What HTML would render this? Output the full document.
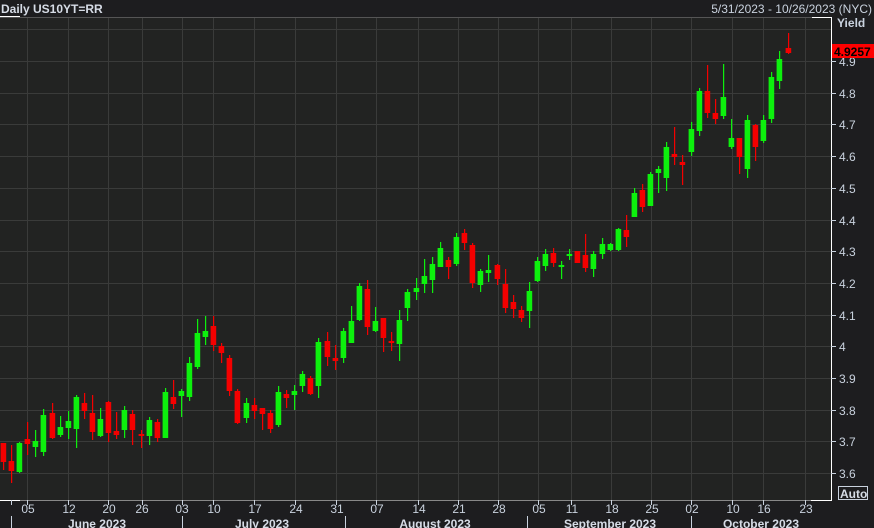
<!DOCTYPE html>
<html><head><meta charset="utf-8"><style>
html,body{margin:0;padding:0;background:#1d1d1f;}
svg{display:block}
text{font-family:"Liberation Sans",sans-serif;}
</style></head><body>
<svg width="874" height="528" viewBox="0 0 874 528" xmlns="http://www.w3.org/2000/svg">
<rect x="0" y="0" width="874" height="528" fill="#1d1d1f"/>
<rect x="0" y="17" width="831" height="483" fill="#222322"/>
<g stroke="#3a3b3a" stroke-width="1">
<line x1="0" y1="29.5" x2="831" y2="29.5"/><line x1="0" y1="61.5" x2="831" y2="61.5"/><line x1="0" y1="93.5" x2="831" y2="93.5"/><line x1="0" y1="124.5" x2="831" y2="124.5"/><line x1="0" y1="156.5" x2="831" y2="156.5"/><line x1="0" y1="188.5" x2="831" y2="188.5"/><line x1="0" y1="220.5" x2="831" y2="220.5"/><line x1="0" y1="251.5" x2="831" y2="251.5"/><line x1="0" y1="283.5" x2="831" y2="283.5"/><line x1="0" y1="315.5" x2="831" y2="315.5"/><line x1="0" y1="346.5" x2="831" y2="346.5"/><line x1="0" y1="378.5" x2="831" y2="378.5"/><line x1="0" y1="410.5" x2="831" y2="410.5"/><line x1="0" y1="441.5" x2="831" y2="441.5"/><line x1="0" y1="473.5" x2="831" y2="473.5"/>
<line x1="27.5" y1="17" x2="27.5" y2="500"/><line x1="68.5" y1="17" x2="68.5" y2="500"/><line x1="108.5" y1="17" x2="108.5" y2="500"/><line x1="142.5" y1="17" x2="142.5" y2="500"/><line x1="182.5" y1="17" x2="182.5" y2="500"/><line x1="213.5" y1="17" x2="213.5" y2="500"/><line x1="254.5" y1="17" x2="254.5" y2="500"/><line x1="295.5" y1="17" x2="295.5" y2="500"/><line x1="336.5" y1="17" x2="336.5" y2="500"/><line x1="376.5" y1="17" x2="376.5" y2="500"/><line x1="418.5" y1="17" x2="418.5" y2="500"/><line x1="458.5" y1="17" x2="458.5" y2="500"/><line x1="498.5" y1="17" x2="498.5" y2="500"/><line x1="538.5" y1="17" x2="538.5" y2="500"/><line x1="571.5" y1="17" x2="571.5" y2="500"/><line x1="611.5" y1="17" x2="611.5" y2="500"/><line x1="651.5" y1="17" x2="651.5" y2="500"/><line x1="691.5" y1="17" x2="691.5" y2="500"/><line x1="732.5" y1="17" x2="732.5" y2="500"/><line x1="763.5" y1="17" x2="763.5" y2="500"/><line x1="805.5" y1="17" x2="805.5" y2="500"/>
</g>
<line x1="0" y1="17.5" x2="812" y2="17.5" stroke="#555" />
<line x1="812" y1="17.5" x2="831" y2="17.5" stroke="#fff"/>
<line x1="0" y1="500.5" x2="831" y2="500.5" stroke="#888"/>
<line x1="0" y1="500.5" x2="20" y2="500.5" stroke="#fff"/>
<line x1="811" y1="500.5" x2="831" y2="500.5" stroke="#fff"/>
<line x1="831.5" y1="17" x2="831.5" y2="501" stroke="#fff"/>

<path stroke="#f40000" stroke-width="1.2" fill="none" d="M3.6 443v27M11.6 445v38M27.6 422v33M52.6 403v36M84.6 393v26M92.6 395v45M108.6 401v41M116.6 412v27M132.6 410v35M141.6 430v18M157.6 419v23M173.6 380v29M213.6 316v35M221.6 343v20M229.6 355v41M237.6 389v35M254.6 398v21M262.6 408v22M270.6 410v23M286.6 390v18M310.6 376v19M327.6 332v34M335.6 345v25M367.6 280v55M383.6 318v34M391.6 332v19M448.6 257v22M464.6 229v21M472.6 243v45M497.6 264v21M505.6 269v44M513.6 295v23M521.6 306v16M553.6 248v19M577.6 251v12M585.6 234v38M626.6 215v32M642.6 184v28M674.6 127v38M682.6 155v30M707.6 65v53M715.6 99v25M739.6 138v36M755.6 124v37M788.6 33v21"/>
<path fill="#f40000" d="M0.6 443h5.6v19h-5.6zM8.6 461h5.6v10h-5.6zM24.6 439h5.6v5h-5.6zM49.6 413h5.6v25h-5.6zM81.6 403h5.6v8h-5.6zM89.6 413h5.6v19h-5.6zM105.6 402h5.6v31h-5.6zM113.6 431h5.6v4h-5.6zM129.6 414h5.6v16h-5.6zM138.6 434h5.6v2h-5.6zM154.6 422h5.6v16h-5.6zM170.6 397h5.6v7h-5.6zM210.6 326h5.6v19h-5.6zM218.6 346h5.6v7h-5.6zM226.6 358h5.6v33h-5.6zM234.6 391h5.6v32h-5.6zM251.6 405h5.6v6h-5.6zM259.6 408h5.6v6h-5.6zM267.6 413h5.6v16h-5.6zM283.6 394h5.6v4h-5.6zM307.6 378h5.6v16h-5.6zM324.6 341h5.6v16h-5.6zM332.6 358h5.6v3h-5.6zM364.6 289h5.6v38h-5.6zM380.6 318h5.6v20h-5.6zM388.6 341h5.6v2h-5.6zM445.6 260h5.6v7h-5.6zM461.6 233h5.6v10h-5.6zM469.6 245h5.6v38h-5.6zM494.6 265h5.6v14h-5.6zM502.6 284h5.6v24h-5.6zM510.6 302h5.6v7h-5.6zM518.6 310h5.6v8h-5.6zM550.6 253h5.6v10h-5.6zM574.6 251h5.6v12h-5.6zM582.6 255h5.6v13h-5.6zM623.6 230h5.6v7h-5.6zM639.6 190h5.6v17h-5.6zM671.6 154h5.6v3h-5.6zM679.6 162h5.6v3h-5.6zM704.6 91h5.6v22h-5.6zM712.6 113h5.6v6h-5.6zM736.6 138h5.6v19h-5.6zM752.6 125h5.6v22h-5.6zM785.6 48h5.6v5h-5.6z"/>
<path stroke="#0df00d" stroke-width="1.2" fill="none" d="M19.6 442v31M35.6 430v27M43.6 409v47M60.6 416v21M68.6 411v28M76.6 395v53M100.6 408v29M124.6 406v32M149.6 417v28M165.6 388v50M181.6 389v28M189.6 357v44M197.6 319v50M205.6 316v29M246.6 398v25M278.6 386v41M294.6 385v25M302.6 371v21M318.6 338v60M343.6 328v35M351.6 306v37M359.6 283v38M375.6 307v25M399.6 310v51M407.6 289v32M416.6 278v22M424.6 259v34M432.6 257v36M440.6 242v25M456.6 233v33M480.6 269v23M488.6 255v27M529.6 282v46M537.6 257v25M545.6 249v22M561.6 261v18M569.6 249v11M593.6 251v26M602.6 238v21M610.6 243v8M618.6 228v23M634.6 188v29M650.6 172v34M658.6 166v27M666.6 142v49M691.6 122v34M699.6 88v48M723.6 64v55M731.6 119v30M747.6 115v63M763.6 115v28M771.6 72v51M779.6 51v38"/>
<path fill="#0df00d" d="M16.6 443h5.6v29h-5.6zM32.6 441h5.6v6h-5.6zM40.6 415h5.6v37h-5.6zM57.6 427h5.6v8h-5.6zM65.6 421h5.6v7h-5.6zM73.6 397h5.6v32h-5.6zM97.6 419h5.6v17h-5.6zM121.6 410h5.6v20h-5.6zM146.6 420h5.6v16h-5.6zM162.6 392h5.6v46h-5.6zM178.6 391h5.6v5h-5.6zM186.6 363h5.6v34h-5.6zM194.6 333h5.6v34h-5.6zM202.6 331h5.6v6h-5.6zM243.6 403h5.6v15h-5.6zM275.6 392h5.6v33h-5.6zM291.6 391h5.6v4h-5.6zM299.6 374h5.6v12h-5.6zM315.6 342h5.6v44h-5.6zM340.6 331h5.6v27h-5.6zM348.6 321h5.6v22h-5.6zM356.6 286h5.6v34h-5.6zM372.6 321h5.6v10h-5.6zM396.6 320h5.6v24h-5.6zM404.6 292h5.6v16h-5.6zM413.6 288h5.6v4h-5.6zM421.6 276h5.6v8h-5.6zM429.6 264h5.6v16h-5.6zM437.6 248h5.6v19h-5.6zM453.6 237h5.6v27h-5.6zM477.6 271h5.6v14h-5.6zM485.6 270h5.6v3h-5.6zM526.6 291h5.6v20h-5.6zM534.6 261h5.6v20h-5.6zM542.6 254h5.6v12h-5.6zM558.6 265h5.6v2h-5.6zM566.6 254h5.6v2h-5.6zM590.6 254h5.6v15h-5.6zM599.6 244h5.6v10h-5.6zM607.6 244h5.6v6h-5.6zM615.6 229h5.6v21h-5.6zM631.6 193h5.6v24h-5.6zM647.6 174h5.6v32h-5.6zM655.6 169h5.6v4h-5.6zM663.6 147h5.6v31h-5.6zM688.6 129h5.6v23h-5.6zM696.6 91h5.6v40h-5.6zM720.6 97h5.6v19h-5.6zM728.6 138h5.6v9h-5.6zM744.6 120h5.6v49h-5.6zM760.6 120h5.6v21h-5.6zM768.6 77h5.6v42h-5.6zM776.6 59h5.6v22h-5.6z"/>

<g fill="#c9d2de" font-size="12">
<text x="1" y="13" font-weight="bold" fill="#d6dce6">Daily US10YT=RR</text>
<text x="872" y="13" text-anchor="end" fill="#c9d2de">5/31/2023 - 10/26/2023 (NYC)</text>
<text x="837" y="27" font-weight="bold" fill="#c9d2de">Yield</text>
</g>
<line x1="0" y1="16.5" x2="20" y2="16.5" stroke="#fff"/>
<g stroke="#c9d2de"><line x1="831" y1="61.5" x2="836" y2="61.5"/><line x1="831" y1="93.5" x2="836" y2="93.5"/><line x1="831" y1="124.5" x2="836" y2="124.5"/><line x1="831" y1="156.5" x2="836" y2="156.5"/><line x1="831" y1="188.5" x2="836" y2="188.5"/><line x1="831" y1="220.5" x2="836" y2="220.5"/><line x1="831" y1="251.5" x2="836" y2="251.5"/><line x1="831" y1="283.5" x2="836" y2="283.5"/><line x1="831" y1="315.5" x2="836" y2="315.5"/><line x1="831" y1="346.5" x2="836" y2="346.5"/><line x1="831" y1="378.5" x2="836" y2="378.5"/><line x1="831" y1="410.5" x2="836" y2="410.5"/><line x1="831" y1="441.5" x2="836" y2="441.5"/><line x1="831" y1="473.5" x2="836" y2="473.5"/></g>
<g fill="#c9d2de" font-size="12">
<text x="839" y="66">4.9</text><text x="839" y="98">4.8</text><text x="839" y="129">4.7</text><text x="839" y="161">4.6</text><text x="839" y="193">4.5</text><text x="839" y="225">4.4</text><text x="839" y="256">4.3</text><text x="839" y="288">4.2</text><text x="839" y="320">4.1</text><text x="839" y="351">4</text><text x="839" y="383">3.9</text><text x="839" y="415">3.8</text><text x="839" y="446">3.7</text><text x="839" y="478">3.6</text>
</g>
<rect x="832" y="44" width="42" height="14" fill="#ff0000"/>
<text x="834" y="56" font-size="12" font-weight="bold" fill="#000">4.9257</text>
<rect x="838.5" y="486.5" width="29" height="13" fill="none" stroke="#c9d2de"/>
<text x="840" y="498" font-size="12" font-weight="bold" fill="#d6dce6">Auto</text>
<g stroke="#c9d2de"><line x1="11.5" y1="500" x2="11.5" y2="505"/><line x1="27.5" y1="500" x2="27.5" y2="505"/><line x1="68.5" y1="500" x2="68.5" y2="505"/><line x1="108.5" y1="500" x2="108.5" y2="505"/><line x1="142.5" y1="500" x2="142.5" y2="505"/><line x1="182.5" y1="500" x2="182.5" y2="505"/><line x1="213.5" y1="500" x2="213.5" y2="505"/><line x1="254.5" y1="500" x2="254.5" y2="505"/><line x1="295.5" y1="500" x2="295.5" y2="505"/><line x1="336.5" y1="500" x2="336.5" y2="505"/><line x1="376.5" y1="500" x2="376.5" y2="505"/><line x1="418.5" y1="500" x2="418.5" y2="505"/><line x1="458.5" y1="500" x2="458.5" y2="505"/><line x1="498.5" y1="500" x2="498.5" y2="505"/><line x1="538.5" y1="500" x2="538.5" y2="505"/><line x1="571.5" y1="500" x2="571.5" y2="505"/><line x1="611.5" y1="500" x2="611.5" y2="505"/><line x1="651.5" y1="500" x2="651.5" y2="505"/><line x1="691.5" y1="500" x2="691.5" y2="505"/><line x1="732.5" y1="500" x2="732.5" y2="505"/><line x1="763.5" y1="500" x2="763.5" y2="505"/><line x1="805.5" y1="500" x2="805.5" y2="505"/>
<line x1="11.5" y1="516" x2="11.5" y2="528"/><line x1="182.5" y1="516" x2="182.5" y2="528"/><line x1="345.5" y1="516" x2="345.5" y2="528"/><line x1="527.5" y1="516" x2="527.5" y2="528"/><line x1="691.5" y1="516" x2="691.5" y2="528"/></g>
<g fill="#c9d2de" font-size="12" text-anchor="middle">
<text x="28" y="513">05</text><text x="69" y="513">12</text><text x="109" y="513">20</text><text x="142" y="513">26</text><text x="182" y="513">03</text><text x="214" y="513">10</text><text x="255" y="513">17</text><text x="296" y="513">24</text><text x="337" y="513">31</text><text x="377" y="513">07</text><text x="419" y="513">14</text><text x="459" y="513">21</text><text x="499" y="513">28</text><text x="539" y="513">05</text><text x="572" y="513">11</text><text x="612" y="513">18</text><text x="652" y="513">25</text><text x="692" y="513">02</text><text x="733" y="513">10</text><text x="764" y="513">16</text><text x="806" y="513">23</text>
<g font-weight="bold" fill="#d6dce6"><text x="97" y="528">June 2023</text><text x="262" y="528">July 2023</text><text x="435" y="528">August 2023</text><text x="610" y="528">September 2023</text><text x="761" y="528">October 2023</text></g>
</g>
</svg>
</body></html>
